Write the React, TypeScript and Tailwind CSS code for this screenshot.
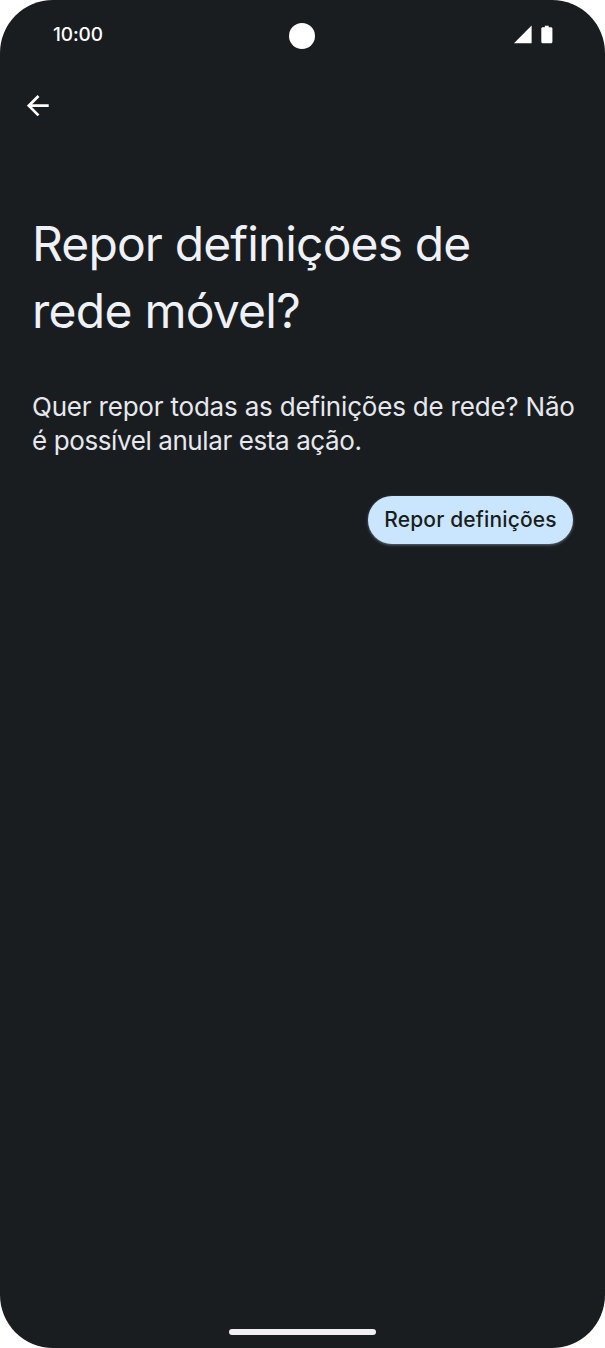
function StatusBar() {
  return (
    <div className="grid h-[71px] grid-cols-3 px-[53px]">
      <time className="pt-[21px] text-[19px] leading-[28px] font-medium tracking-[-0.1px] text-white">
        10:00
      </time>
      <div className="mt-[23px] size-[26px] justify-self-center rounded-full bg-white" />
      <div className="mt-[25px] -mr-px flex h-[19px] items-start justify-end gap-[9px] text-white">
        <svg width="18" height="19" viewBox="0 0 18 19" fill="currentColor" aria-hidden="true">
          <path d="M0 18.2 17.600 .6v17.6z" />
        </svg>
        <svg width="12" height="19" viewBox="0 0 12 19" fill="currentColor" aria-hidden="true">
          <path d="M3.800.7h3.900v1.500h2.200c.9 0 1.500.6 1.500 1.400v13.200c0 .9-.6 1.500-1.500 1.500H1.800c-.9 0-1.500-.6-1.500-1.500V3.600c0-.8.6-1.400 1.500-1.400h2z" />
        </svg>
      </div>
    </div>
  )
}

export default function App() {
  return (
    <div className="h-[1348px] w-[605px] overflow-hidden bg-white font-['Inter',sans-serif]">
      <div className="flex h-full flex-col rounded-[53px] bg-[#1a1d20]">
        <StatusBar />

        <header className="h-[140px] pt-[24px] pl-[27px]">
          <button type="button" aria-label="Voltar" className="block text-white">
            <svg width="23" height="22" viewBox="0 0 23 22" fill="none" stroke="currentColor" strokeWidth="2.7" aria-hidden="true">
              <path d="M21.700 10.700H2M11.500 1 1.800 10.700l9.700 9.700" />
            </svg>
          </button>
        </header>

        <main className="flex grow flex-col px-[32px]">
          <h1 className="text-[48px] leading-[66.5px] font-normal whitespace-nowrap text-[#eff1f9]">
            <span className="block tracking-[-0.88px]">Repor definições de</span>
            <span className="block tracking-[-0.75px]">rede móvel?</span>
          </h1>

          <p className="mt-[46px] text-[26px] leading-[33.5px] font-normal whitespace-nowrap text-[#e6e8ef]">
            <span className="block tracking-[-0.2px]">Quer repor todas as definições de rede? Não</span>
            <span className="block tracking-[-0.4px]">é possível anular esta ação.</span>
          </p>

          <button
            type="button"
            className="mt-[39px] h-[48px] w-[205px] self-end rounded-full bg-[#cae6ff] text-[21px] font-medium tracking-[0.15px] whitespace-nowrap text-[#1a1d20] shadow-[0_1px_3px_rgba(202,230,255,0.4)]"
          >
            Repor definições
          </button>
        </main>

        <div className="mb-[13px] h-[6px] w-[147px] self-center rounded-full bg-[#f0eff4]" />
      </div>
    </div>
  )
}
